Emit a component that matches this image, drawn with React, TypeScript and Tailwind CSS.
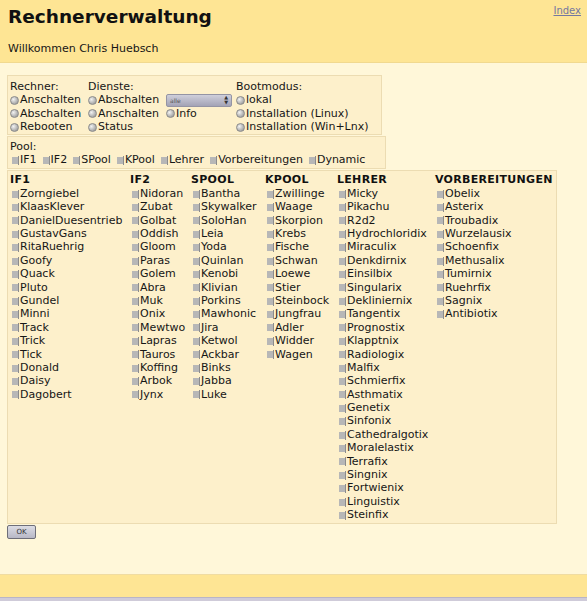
import React from "react";

const FONT = { fontFamily: '"DejaVu Sans", Verdana, sans-serif' };

const columns: { title: string; width: string; items: string[] }[] = [
  {
    title: "IF1",
    width: "w-[120px]",
    items: [
      "Zorngiebel", "KlaasKlever", "DanielDuesentrieb", "GustavGans", "RitaRuehrig", "Goofy",
      "Quack", "Pluto", "Gundel", "Minni", "Track", "Trick", "Tick", "Donald", "Daisy", "Dagobert",
    ],
  },
  {
    title: "IF2",
    width: "w-[61px]",
    items: [
      "Nidoran", "Zubat", "Golbat", "Oddish", "Gloom", "Paras", "Golem", "Abra", "Muk", "Onix",
      "Mewtwo", "Lapras", "Tauros", "Koffing", "Arbok", "Jynx",
    ],
  },
  {
    title: "SPOOL",
    width: "w-[74px]",
    items: [
      "Bantha", "Skywalker", "SoloHan", "Leia", "Yoda", "Quinlan", "Kenobi", "Klivian", "Porkins",
      "Mawhonic", "Jira", "Ketwol", "Ackbar", "Binks", "Jabba", "Luke",
    ],
  },
  {
    title: "KPOOL",
    width: "w-[72px]",
    items: [
      "Zwillinge", "Waage", "Skorpion", "Krebs", "Fische", "Schwan", "Loewe", "Stier", "Steinbock",
      "Jungfrau", "Adler", "Widder", "Wagen",
    ],
  },
  {
    title: "LEHRER",
    width: "w-[98px]",
    items: [
      "Micky", "Pikachu", "R2d2", "Hydrochloridix", "Miraculix", "Denkdirnix", "Einsilbix",
      "Singularix", "Dekliniernix", "Tangentix", "Prognostix", "Klapptnix", "Radiologix", "Malfix",
      "Schmierfix", "Asthmatix", "Genetix", "Sinfonix", "Cathedralgotix", "Moralelastix", "Terrafix",
      "Singnix", "Fortwienix", "Linguistix", "Steinfix",
    ],
  },
  {
    title: "VORBEREITUNGEN",
    width: "w-[118px]",
    items: [
      "Obelix", "Asterix", "Troubadix", "Wurzelausix", "Schoenfix", "Methusalix", "Tumirnix",
      "Ruehrfix", "Sagnix", "Antibiotix",
    ],
  },
];

function Check() {
  return (
    <span className="inline-flex items-center shrink-0 ml-[2px] mr-[1px]">
      <span className="w-[6px] h-[7px] bg-[#b7b7b7]" />
      <span className="w-[1px] h-[9px] bg-[#8c8c8c]" />
    </span>
  );
}

function Radio() {
  return (
    <span className="inline-block shrink-0 w-[9px] h-[9px] mr-[1px] rounded-full border border-[#8a8a8a] bg-[radial-gradient(circle_at_35%_35%,#f2f2f2,#a8a8a8_70%)]" />
  );
}

function RadioRow({ label }: { label: string }) {
  return (
    <div className="flex items-center h-[13.5px] whitespace-nowrap">
      <Radio />
      <span>{label}</span>
    </div>
  );
}

function Line({ children }: { children: React.ReactNode }) {
  return <div className="flex items-center h-[13.5px] whitespace-nowrap">{children}</div>;
}

export default function App() {
  return (
    <div className="w-full h-[601px] flex flex-col bg-[#fff7d9] text-[11px] text-[#161616]" style={FONT}>
      {/* header */}
      <div className="h-[63px] shrink-0 flex justify-between bg-[#fee594] border-b border-[#f1d98f] px-[8px]">
        <div className="flex flex-col">
          <h1 className="text-[18.5px] font-bold leading-none mt-[8px] text-[#111]">Rechnerverwaltung</h1>
          <div className="mt-[14px]">Willkommen Chris Huebsch</div>
        </div>
        <a href="#" className="text-[10px] underline text-[#7478a0] mt-[3px] mr-[-2px]">
          Index
        </a>
      </div>

      {/* content */}
      <div className="flex-1 flex flex-col items-start px-[7px] pt-[12px]">
        {/* actions */}
        <div className="w-[375px] bg-[#fdf0cb] border border-[#ecdcb2] px-[2px] pt-[4px] flex">
          <div className="w-[78px]">
            <Line>Rechner:</Line>
            <RadioRow label="Anschalten" />
            <RadioRow label="Abschalten" />
            <RadioRow label="Rebooten" />
          </div>
          <div className="w-[78px]">
            <Line>Dienste:</Line>
            <RadioRow label="Abschalten" />
            <RadioRow label="Anschalten" />
            <RadioRow label="Status" />
          </div>
          <div className="w-[70px]">
            <Line>&nbsp;</Line>
            <div className="flex items-center h-[13.5px]">
              <div className="w-[66px] h-[13px] flex items-center justify-between rounded-[2px] border border-[#9494a4] bg-gradient-to-b from-[#cfcfdb] to-[#a3a3b6] px-[3px]">
                <span className="text-[6px] text-[#555]">alle</span>
                <span className="flex flex-col items-center leading-none text-[5px] text-[#333]">
                  <span>▲</span>
                  <span>▼</span>
                </span>
              </div>
            </div>
            <RadioRow label="Info" />
          </div>
          <div>
            <Line>Bootmodus:</Line>
            <RadioRow label="lokal" />
            <RadioRow label="Installation (Linux)" />
            <RadioRow label="Installation (Win+Lnx)" />
          </div>
        </div>

        {/* pool */}
        <div className="w-[379px] mt-[1px] bg-[#fdf0cb] border border-[#ecdcb2] px-[2px] pt-[3px] pb-[1px]">
          <Line>Pool:</Line>
          <div className="flex items-center h-[13.5px] whitespace-nowrap gap-[4px]">
            {["IF1", "IF2", "SPool", "KPool", "Lehrer", "Vorbereitungen", "Dynamic"].map((p) => (
              <span key={p} className="flex items-center">
                <Check />
                <span>{p}</span>
              </span>
            ))}
          </div>
        </div>

        {/* rooms */}
        <div className="w-[550px] mt-[1px] bg-[#fdf0cb] border border-[#ecdcb2] px-[2px] pt-[3px] pb-[1px] flex">
          {columns.map((col) => (
            <div key={col.title} className={`${col.width} shrink-0`}>
              <div className="h-[13.4px] flex items-center font-bold text-[#111] tracking-[0.3px]">{col.title}</div>
              {col.items.map((it) => (
                <div key={it} className="h-[13.4px] flex items-center whitespace-nowrap">
                  <Check />
                  <span>{it}</span>
                </div>
              ))}
            </div>
          ))}
        </div>

        <button className="mt-[1px] w-[29px] h-[14px] flex items-center justify-center rounded-[2px] border border-[#6e6e78] bg-gradient-to-b from-[#dcdce4] to-[#b8b8c6] text-[7px] text-[#333]">
          OK
        </button>
      </div>

      {/* footer */}
      <div className="h-[23px] shrink-0 bg-[#fee594] border-t border-[#f0dca2]" />
      <div className="h-[4px] shrink-0 bg-[#cfcbd9] border-t border-[#b9b5c6]" />
    </div>
  );
}
